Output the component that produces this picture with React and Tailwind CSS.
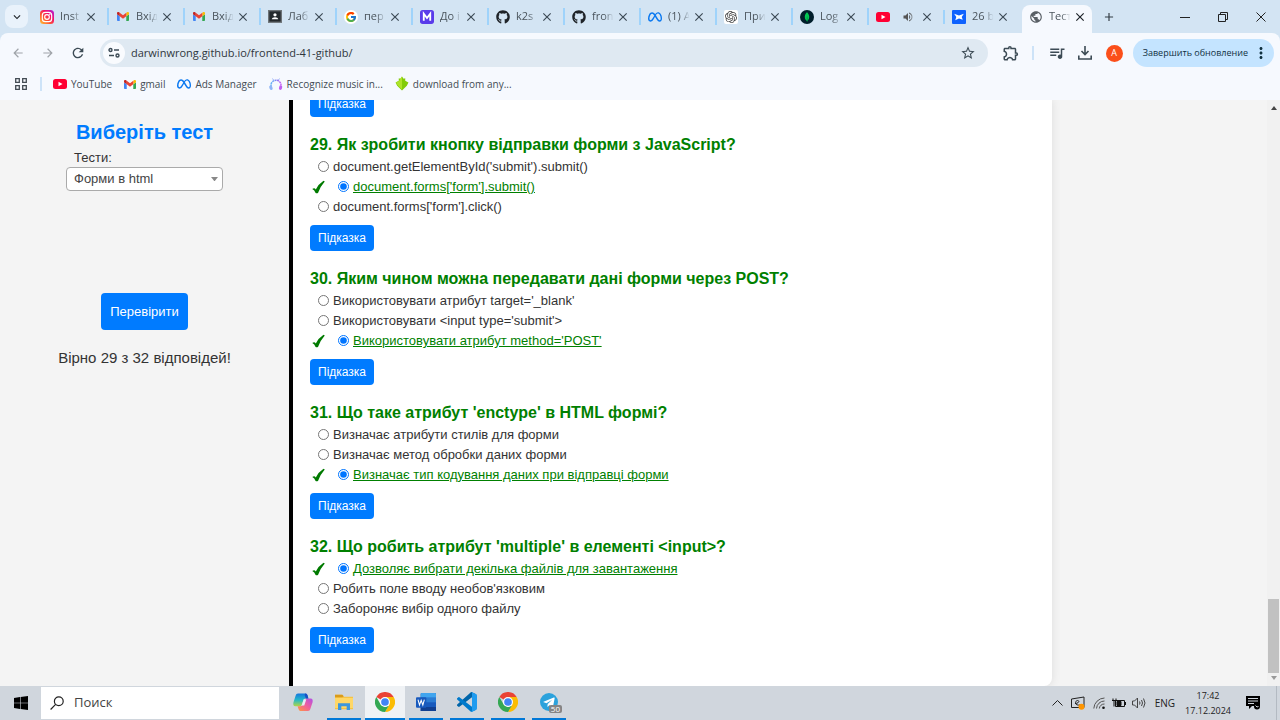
import React from "react";
import { FcGoogle } from "react-icons/fc";
import { FaGithub } from "react-icons/fa";
import { SiMeta, SiOpenai, SiMongodb } from "react-icons/si";
import {
  MdPublic,
  MdStarBorder,
  MdOutlineExtension,
  MdOutlineQueueMusic,
  MdVolumeUp,
  MdClose,
  MdAdd,
  MdMoreVert,
  MdArrowBack,
  MdArrowForward,
  MdRefresh,
  MdKeyboardArrowDown,
} from "react-icons/md";

const ui = "font-['Open_Sans','Noto_Sans',sans-serif]";

function Instagram() {
  return (
    <svg viewBox="0 0 24 24" className="size-3.5">
      <defs>
        <linearGradient id="ig" x1="0" y1="1" x2="1" y2="0">
          <stop offset="0" stopColor="#ffc837" />
          <stop offset=".35" stopColor="#ff5a2c" />
          <stop offset=".65" stopColor="#f2106d" />
          <stop offset="1" stopColor="#a621e0" />
        </linearGradient>
      </defs>
      <rect width="24" height="24" rx="6" fill="url(#ig)" />
      <rect x="4" y="4" width="16" height="16" rx="5" fill="none" stroke="#fff" strokeWidth="2" />
      <circle cx="12" cy="12" r="4" fill="none" stroke="#fff" strokeWidth="2" />
      <circle cx="16.8" cy="7.2" r="1.2" fill="#fff" />
    </svg>
  );
}

function Gmail() {
  return (
    <svg viewBox="52 42 88 66" className="w-3">
      <path fill="#4285f4" d="M58 108h14V74L52 59v43c0 3.32 2.69 6 6 6" />
      <path fill="#34a853" d="M120 108h14c3.32 0 6-2.69 6-6V59l-20 15" />
      <path fill="#fbbc04" d="M120 48v26l20-15v-8c0-7.42-8.47-11.65-14.4-7.2" />
      <path fill="#ea4335" d="M72 74V48l24 18 24-18v26L96 92" />
      <path fill="#c5221f" d="M52 51v8l20 15V48l-5.6-4.2c-5.94-4.45-14.4-.22-14.4 7.2" />
    </svg>
  );
}

function YouTube() {
  return (
    <svg viewBox="0 0 28 20" className="w-3.5">
      <rect width="28" height="20" rx="5" fill="#ff0033" />
      <path d="M11 5.5v9l8-4.5z" fill="#fff" />
    </svg>
  );
}

function Classroom() {
  return (
    <svg viewBox="0 0 26 24" className="w-3.5">
      <rect width="26" height="24" fill="#6d7377" />
      <rect x="2.5" y="2.5" width="21" height="19" fill="#24292c" />
      <circle cx="13" cy="9" r="3" fill="#fff" />
      <path d="M7 17c0-5 12-5 12 0z" fill="#fff" />
    </svg>
  );
}

function MLogo() {
  return (
    <svg viewBox="0 0 26 26" className="size-3.5">
      <rect width="26" height="26" rx="5" fill="#5a3bea" />
      <path d="M7 20V7l6 8 6-8v13" fill="none" stroke="#fff" strokeWidth="3.4" />
    </svg>
  );
}

function Bluebird() {
  return (
    <svg viewBox="0 0 26 26" className="size-3.5">
      <rect width="26" height="26" rx="2" fill="#0f62fe" />
      <path d="M4 7l9 3 9-3-4 6 2 5-7-2-7 3 2-6z" fill="#fff" />
    </svg>
  );
}

function Headphones() {
  return (
    <svg viewBox="0 0 28 26" className="w-3.5">
      <defs>
        <linearGradient id="hp" x1="0" x2="1">
          <stop offset="0" stopColor="#6bb7f5" />
          <stop offset=".5" stopColor="#7f86f4" />
          <stop offset="1" stopColor="#c85cf3" />
        </linearGradient>
      </defs>
      <path d="M4 17V14a10 9.500 0 0 1 20 0v3" fill="none" stroke="url(#hp)" strokeWidth="3" strokeDasharray="4 1" />
      <path d="M9 4 7 1M19 4l2-3" stroke="#7f9df4" strokeWidth="1.500" />
      <rect x="1" y="15" width="6" height="9" rx="3" transform="rotate(-15 4 20)" fill="#8fb4f7" />
      <rect x="20" y="15" width="6" height="9" rx="3" transform="rotate(15 24 20)" fill="#c060f2" />
    </svg>
  );
}

function GreenArrow() {
  return (
    <svg viewBox="0 0 26 28" className="w-3.5">
      <path d="M7 4l3 1 3-4 3 4 3-1v5l6 3-3 6-9 9-9-9-3-6 6-3z" fill="#83cc0a" />
      <path d="M10 5l3-4v24L5 17l-3-5 6-3z" fill="#aee32a" />
    </svg>
  );
}

function ChromeLogo() {
  return (
    <svg viewBox="0 0 48 48" className="size-5">
      <path fill="#ea4335" d="M24 24 3.2 12A24 24 0 0 1 44.8 12z" />
      <path fill="#fbbc04" d="M24 12h20.8A24 24 0 0 1 24 48l10.4-18z" />
      <path fill="#34a853" d="M3.2 12 13.6 30 24 36l9-3L24 48A24 24 0 0 1 3.2 12z" />
      <circle cx="24" cy="24" r="12" fill="#fff" />
      <circle cx="24" cy="24" r="9.2" fill="#4285f4" />
    </svg>
  );
}

function Copilot() {
  return (
    <svg viewBox="0 0 48 44" className="w-5">
      <defs>
        <linearGradient id="cpa" x1="0" y1="0" x2="0" y2="1">
          <stop offset="0" stopColor="#1576e0" />
          <stop offset=".5" stopColor="#25b8c9" />
          <stop offset="1" stopColor="#b5d643" />
        </linearGradient>
        <linearGradient id="cpb" x1="1" y1="0" x2="0" y2="1">
          <stop offset="0" stopColor="#b04fe8" />
          <stop offset=".5" stopColor="#f0609a" />
          <stop offset="1" stopColor="#ff9a3c" />
        </linearGradient>
      </defs>
      <path d="M12 1h18c3 0 4 2 5 5l2 7h-6c-4 0-6 2-7 6l-3 9c-1 3-3 4-6 4H6c-5 0-6-4-5-9l5-16c1-4 3-6 6-6z" fill="url(#cpa)" />
      <path d="M36 43H18c-3 0-4-2-5-5l-2-6h6c4 0 6-2 7-6l3-9c1-3 3-4 6-4h9c5 0 6 4 5 9l-5 15c-1 4-3 6-6 6z" fill="url(#cpb)" />
      <path d="M26 15h6l-5 15h-6z" fill="#e9edf4" />
      <path d="M29 1c4 0 5 2 6 5l2 7h-6l-3-8z" fill="#1b4fc4" />
    </svg>
  );
}

function Explorer() {
  return (
    <svg viewBox="0 0 54 48" className="w-[18px]">
      <path d="M0 2h22l5 6h27v38H0z" fill="#f6c342" />
      <path d="M0 2h22l4 5-4 3H0z" fill="#d99b1c" />
      <path d="M0 12h54v30H0z" fill="#ffd766" />
      <path d="M9 48V28h36v20H35V37H19v11z" fill="#3d97dd" />
    </svg>
  );
}

function Word() {
  return (
    <svg viewBox="0 0 60 56" className="w-5">
      <rect x="14" width="46" height="56" rx="3" fill="#185abd" />
      <path d="M14 3a3 3 0 0 1 3-3h40a3 3 0 0 1 3 3v11H14z" fill="#41a5ee" />
      <path d="M14 14h46v14H14z" fill="#2b7cd3" />
      <path d="M14 42h46v11a3 3 0 0 1-3 3H17a3 3 0 0 1-3-3z" fill="#103f91" />
      <rect y="13" width="31" height="31" rx="3" fill="#185abd" />
      <path d="m6 20 4.5 16L15.500 22l5 14L25 20" fill="none" stroke="#fff" strokeWidth="3.200" />
    </svg>
  );
}

function VSCode() {
  return (
    <svg viewBox="0 0 100 100" className="size-5">
      <path fill="#0065a9" d="M96 11 75 1c-2-1-5-1-7 1L1 63c-2 2-2 5 0 6l6 5c2 1 4 1 5 0L93 13c3-2 7 0 7 3 0-2-2-4-4-5z" />
      <path fill="#007acc" d="M96 89 75 99c-2 1-5 1-7-1L1 37c-2-2-2-5 0-6l6-5c2-1 4-1 5 0l81 61c3 2 7 0 7-3 0 2-2 4-4 5z" />
      <path fill="#1f9cf0" d="M75 99c-2 1-5 1-7-1 3 2 7 0 7-3V5c0-4-4-6-7-3 2-2 5-2 7-1l21 10c2 1 4 3 4 6v66c0 3-2 5-4 6z" />
    </svg>
  );
}

function Telegram() {
  return (
    <span className="relative flex">
      <svg viewBox="0 0 56 56" className="size-[18px]">
        <circle cx="28" cy="28" r="28" fill="#2ba2dc" />
        <path d="M11 27 43 14c2-1 3 0 2.500 3l-5 25c0 2-2 2.500-3.500 1.500L29 38l-4 4c-1 1-2 1-2-1l1-7 14-13-18 11-8-3c-2-.6-2-1.500-1-2z" fill="#fff" />
      </svg>
      <span className="absolute -right-1 -bottom-0.5 rounded-xs bg-[#858585] px-0.5 text-[8px] leading-2 text-white">50</span>
    </span>
  );
}

const tabs = [
  { icon: <Instagram />, title: "Inst" },
  { icon: <Gmail />, title: "Вхід" },
  { icon: <Gmail />, title: "Вхід" },
  { icon: <Classroom />, title: "Лаб" },
  { icon: <span className="rounded-full bg-white p-px"><FcGoogle className="size-3" /></span>, title: "пер" },
  { icon: <MLogo />, title: "До і" },
  { icon: <FaGithub className="size-3.5 text-[#1f2328]" />, title: "k2s" },
  { icon: <FaGithub className="size-3.5 text-[#1f2328]" />, title: "fron" },
  { icon: <SiMeta className="size-3.5 text-[#0a78f0]" />, title: "(1) A" },
  { icon: <span className="rounded-xs bg-white p-px"><SiOpenai className="size-3 text-[#444]" /></span>, title: "При" },
  { icon: <span className="rounded-full bg-[#001e2b] p-0.5"><SiMongodb className="size-2.5 text-[#00c853]" /></span>, title: "Log" },
  { icon: <YouTube />, sound: true, title: "" },
  { icon: <Bluebird />, title: "26 b" },
];

function TabBody({ tab, active }) {
  return (
    <>
      <span className="flex w-3.5 shrink-0 justify-center">{tab.icon}</span>
      <span className="ml-1.5 flex w-6 shrink-0 items-center text-[11px] whitespace-nowrap text-[#4a545c] mask-r-from-50% mask-r-to-90%">
        {tab.sound ? <MdVolumeUp className="ml-1.5 size-3 text-[#555]" /> : tab.title}
      </span>
      <button aria-label="Закрити вкладку" className={active ? "text-[#1d2329]" : "text-[#3c4a55]"}>
        <MdClose className="size-3.5 stroke-current" />
      </button>
    </>
  );
}

function TabStrip() {
  return (
    <div className="flex h-[33px] shrink-0 items-center bg-[#d3e4f3]">
      <button aria-label="Пошук вкладок" className="ml-[5px] flex size-[23px] items-center justify-center rounded-lg bg-[#e9f2fb] text-[#20262b]">
        <MdKeyboardArrowDown className="size-3.5 stroke-current" />
      </button>
      <div className="ml-[5px] flex min-w-0 items-center">
        {tabs.map((tab, i) => (
          <div key={i} className={i === 12 ? "flex w-[76px] items-center pl-[7px]" : "flex w-[76px] items-center border-r-2 border-[#9fd3fb] pl-[7px]"}>
            <TabBody tab={tab} />
          </div>
        ))}
      </div>
      <div className="ml-px mt-[5px] flex w-[70px] items-center self-stretch rounded-t-lg bg-[#f6f9fe] pb-[5px] pl-[7px]">
        <TabBody active tab={{ icon: <MdPublic className="size-3.5 text-[#5a6066]" />, title: "Тест" }} />
      </div>
      <button aria-label="Нова вкладка" className="ml-2.5 text-[#333c44]">
        <MdAdd className="size-3.5" />
      </button>
      <div className="ml-auto flex text-[#222]">
        <button aria-label="Згорнути" className="flex w-[38px] justify-center">
          <svg viewBox="0 0 10 10" className="size-2.5" fill="none" stroke="currentColor"><path d="M0 5.500h10" /></svg>
        </button>
        <button aria-label="Відновити" className="flex w-[38px] justify-center">
          <svg viewBox="0 0 10 10" className="size-2.5" fill="none" stroke="currentColor"><path d="M.5 2.500h7v7h-7zM2.500 2.500v-2h7v7h-2" /></svg>
        </button>
        <button aria-label="Закрити" className="flex w-[38px] justify-center">
          <svg viewBox="0 0 10 10" className="size-2.5" fill="none" stroke="currentColor"><path d="M.5.5l9 9M9.500.5l-9 9" /></svg>
        </button>
      </div>
    </div>
  );
}

function Toolbar() {
  return (
    <div className="flex h-10 shrink-0 items-center rounded-t-lg bg-[#f6f9fe] pr-1.5 text-[#3c4b55]">
      <button aria-label="Назад" className="ml-[11px] text-[#9fa4a9]"><MdArrowBack className="size-3.5" /></button>
      <button aria-label="Вперед" className="ml-4 text-[#9fa4a9]"><MdArrowForward className="size-3.5" /></button>
      <button aria-label="Оновити" className="ml-[15px]"><MdRefresh className="size-4" /></button>
      <div className="ml-3.5 flex h-7 min-w-0 flex-1 items-center rounded-full bg-[#dfe9f2] pr-3 pl-[3px]">
        <button aria-label="Відомості про сайт" className="flex size-[22px] shrink-0 items-center justify-center rounded-full bg-[#f9fbfe]">
          <svg viewBox="0 0 12 12" className="size-3" fill="none" stroke="currentColor" strokeWidth="1.400">
            <circle cx="2.500" cy="3" r="1.500" /><path d="M6 3h5M1 8.500h5" /><circle cx="9.500" cy="8.500" r="1.500" />
          </svg>
        </button>
        <input aria-label="Адресний рядок" defaultValue="darwinwrong.github.io/frontend-41-github/" className="ml-1.5 min-w-0 flex-1 bg-transparent text-[11px] text-[#30373d] outline-none" />
        <button aria-label="Додати закладку"><MdStarBorder className="size-4" /></button>
      </div>
      <button aria-label="Розширення" className="ml-3.5"><MdOutlineExtension className="size-[18px]" /></button>
      <span className="ml-3 h-3.5 w-0.5 bg-[#cde3f8]" />
      <button aria-label="Медіа" className="ml-3.5"><MdOutlineQueueMusic className="size-[18px]" /></button>
      <button aria-label="Завантаження" className="ml-3">
        <svg viewBox="0 0 14 14" className="size-3.5" fill="none" stroke="currentColor" strokeWidth="1.600">
          <path d="M7 0v8M3.500 5 7 8.500 10.500 5M.8 9.500V13h12.400V9.500" />
        </svg>
      </button>
      <button className="ml-3.5 size-[17px] rounded-full bg-[#fb4f1a] text-[9px] text-white">A</button>
      <button className="ml-2.5 flex h-7 items-center rounded-full bg-[#c4e4ff] pr-1 pl-2.5 text-[9px] font-medium text-[#10303f]">
        Завершить обновление
        <MdMoreVert className="ml-1 size-[18px]" />
      </button>
    </div>
  );
}

function Bookmark({ icon, children }) {
  return (
    <a href="#" className="flex items-center gap-1">
      {icon}
      {children}
    </a>
  );
}

function Bookmarks() {
  return (
    <nav className="flex h-[27px] shrink-0 items-center bg-[#f6f9fe] pb-[5px] text-[10px] text-[#434c54]">
      <button aria-label="Усі закладки" className="ml-[15px]">
        <svg viewBox="0 0 12 12" className="size-3" fill="none" stroke="currentColor" strokeWidth="1.300">
          <path d="M.7.7h3.600v3.600H.7zM7.700.7h3.600v3.600H7.700zM.7 7.700h3.600v3.600H.7zM7.700 7.700h3.600v3.600H7.700z" />
        </svg>
      </button>
      <span className="ml-[13px] h-3.5 w-0.5 bg-[#cde3f8]" />
      <div className="ml-[11px] flex gap-3">
        <Bookmark icon={<YouTube />}>YouTube</Bookmark>
        <Bookmark icon={<Gmail />}>gmail</Bookmark>
        <Bookmark icon={<SiMeta className="size-3.5 text-[#0a78f0]" />}>Ads Manager</Bookmark>
        <Bookmark icon={<Headphones />}>Recognize music in...</Bookmark>
        <Bookmark icon={<GreenArrow />}>download from any...</Bookmark>
      </div>
    </nav>
  );
}

const questions = [
  {
    n: 29,
    title: "Як зробити кнопку відправки форми з JavaScript?",
    options: ["document.getElementById('submit').submit()", "document.forms['form'].submit()", "document.forms['form'].click()"],
    right: 1,
  },
  {
    n: 30,
    title: "Яким чином можна передавати дані форми через POST?",
    options: ["Використовувати атрибут target='_blank'", "Використовувати <input type='submit'>", "Використовувати атрибут method='POST'"],
    right: 2,
  },
  {
    n: 31,
    title: "Що таке атрибут 'enctype' в HTML формі?",
    options: ["Визначає атрибути стилів для форми", "Визначає метод обробки даних форми", "Визначає тип кодування даних при відправці форми"],
    right: 2,
  },
  {
    n: 32,
    title: "Що робить атрибут 'multiple' в елементі <input>?",
    options: ["Дозволяє вибрати декілька файлів для завантаження", "Робить поле вводу необов'язковим", "Забороняє вибір одного файлу"],
    right: 0,
  },
];

function Hint() {
  return (
    <button className="h-[26px] shrink-0 self-start rounded bg-[#007bff] px-2 text-xs text-white">Підказка</button>
  );
}

function Question({ q }) {
  return (
    <section className="flex shrink-0 flex-col">
      <h3 className="text-base leading-6 font-bold text-[#008000]">{q.n}. {q.title}</h3>
      {q.options.map((text, i) => {
        const right = i === q.right;
        return (
          <div key={text} className={right ? "flex h-5 items-center pl-0.5" : "flex h-5 items-center pl-2"}>
            {right && (
              <svg viewBox="0 0 14 14" className="mr-3 size-3.5">
                <path d="M.3 9Q2.500 7.200 3.800 9.600Q6.500 4 11.500.8L12.800 1.400Q8.500 6 6 13Q4.500 13.500 3.600 13Q2.500 10.200.3 9z" fill="#007a00" />
              </svg>
            )}
            <input type="radio" id={"q" + q.n + "-" + i} name={"q" + q.n} defaultChecked={right} className="mb-0.5 size-[11px] accent-[#0075ff]" />
            <label htmlFor={"q" + q.n + "-" + i} className={right ? "ml-1 text-[13px] leading-5 text-[#008000] underline" : "ml-1 text-[13px] leading-5 text-[#333]"}>
              {text}
            </label>
          </div>
        );
      })}
      <div className="mt-2 flex">
        <Hint />
      </div>
    </section>
  );
}

function Page() {
  return (
    <div className="flex min-h-0 flex-1 bg-[#f4f4f4] font-['Liberation_Sans',Arial,sans-serif] text-[#333]">
      <aside className="flex w-[289px] shrink-0 flex-col items-center pt-4">
        <h2 className="text-xl leading-8 font-bold text-[#007bff]">Виберіть тест</h2>
        <div className="flex w-[157px] flex-col">
          <label htmlFor="tests" className="pl-2 text-[13px] leading-[19px]">Тести:</label>
          <div className="relative flex">
            <select id="tests" className="h-6 w-full appearance-none rounded border border-[#aaa] bg-white px-[7px] text-[13px] text-[#444]">
              <option>Форми в html</option>
            </select>
            <svg viewBox="0 0 8 5" className="pointer-events-none absolute top-2.5 right-[5px] w-[7px]"><path d="M0 0h8L4 5z" fill="#888" /></svg>
          </div>
        </div>
        <button className="mt-[102px] h-[37px] rounded bg-[#007bff] px-[9px] text-[13px] text-white">Перевірити</button>
        <p className="mt-4 text-[15px] leading-6">Вірно 29 з 32 відповідей!</p>
      </aside>
      <div className="flex min-w-0 flex-1 overflow-hidden">
        <main className="flex w-[78%] flex-col justify-end gap-4 overflow-hidden rounded-br-lg border-l-4 border-black bg-white pb-[33px] pl-[17px] shadow-[0_0_10px_rgba(0,0,0,0.1)]">
          <Hint />
          {questions.map((q) => <Question key={q.n} q={q} />)}
        </main>
      </div>
      <div className="flex w-[13px] shrink-0 flex-col items-center bg-[#f1f1f1] py-1.5">
        <svg viewBox="0 0 6 4" className="w-1.5"><path d="M0 4h6L3 0z" fill="#444" /></svg>
        <div className="mt-auto mb-[3px] h-[74px] w-[11px] bg-[#c1c1c1]" />
        <svg viewBox="0 0 6 4" className="w-1.5"><path d="M0 0h6L3 4z" fill="#999" /></svg>
      </div>
    </div>
  );
}

const apps = [
  { name: "Copilot", icon: <Copilot /> },
  { name: "Провідник", icon: <Explorer />, open: true },
  { name: "Chrome", icon: <ChromeLogo />, open: true, active: true },
  { name: "Word", icon: <Word />, open: true },
  { name: "VS Code", icon: <VSCode />, open: true },
  { name: "Chrome 2", icon: <ChromeLogo />, open: true },
  { name: "Telegram", icon: <Telegram />, open: true },
];

function Taskbar() {
  return (
    <footer className="flex h-[34px] shrink-0 items-stretch bg-[#d0d6dd] text-[#222]">
      <button aria-label="Пуск" className="flex w-[41px] items-center justify-center">
        <svg viewBox="0 0 14 14" className="size-3.5">
          <path d="M0 2 6 1v5.700H0zM6.600.9 14 0v6.700H6.600zM0 7.300h6V13l-6-1zM6.600 7.300H14V14l-7.400-1z" fill="#000" />
        </svg>
      </button>
      <div className="my-px flex w-[238px] items-center bg-white pl-[9px]">
        <svg viewBox="0 0 14 14" className="size-3.5" fill="none" stroke="#222" strokeWidth="1.200">
          <circle cx="8.800" cy="5.200" r="4.400" /><path d="M5.600 8.400.6 13.500" />
        </svg>
        <input aria-label="Поиск" placeholder="Поиск" className="ml-2.5 w-40 text-[13px] outline-none placeholder:text-[#444]" />
      </div>
      <div className="ml-1 flex gap-px">
        {apps.map((a) => (
          <button
            key={a.name}
            aria-label={a.name}
            className={a.active ? "flex w-10 flex-col items-center bg-[#eff2f5]" : "flex w-10 flex-col items-center px-[3px]"}
          >
            <span className="flex flex-1 items-center">{a.icon}</span>
            <span className={a.open ? "h-0.5 w-full bg-[#0078d7]" : "h-0.5 w-full"} />
          </button>
        ))}
      </div>
      <div className="ml-auto flex items-center">
        <svg viewBox="0 0 11 6" className="w-[11px]" fill="none" stroke="currentColor"><path d="m.5 5.500 5-5 5 5" /></svg>
        <svg viewBox="0 0 14 14" className="ml-2 size-3.5" fill="none" stroke="currentColor">
          <path d="M.5 3 13 1v10.500H.5zM4 7.500c4 0 5-3 2.500-3s-3.500 5.500 2.500 4.500" />
          <circle cx="10.500" cy="10.800" r="3" fill="#ff9500" stroke="none" />
        </svg>
        <svg viewBox="0 0 12 12" className="ml-2 size-3" fill="none" stroke="#555">
          <path d="M.8 11.500A11 11 0 0 1 11.500 1M3.500 11.500a8 8 0 0 1 8-7.500M6.300 11.500A5 5 0 0 1 11.500 7" /><circle cx="10.500" cy="10.700" r="1.300" fill="#111" stroke="none" />
        </svg>
        <svg viewBox="0 0 14 10" className="ml-[7px] w-3.5" fill="none" stroke="#111">
          <path d="M3.500 2.500h9v6h-9zM13.500 4v3M1 .5v2M4 .5v2M0 2.500h5M2 3v5.500" /><path d="M5 3.500h4v4H5z" fill="#111" />
        </svg>
        <svg viewBox="0 0 14 12" className="ml-1.5 w-3.5" fill="none" stroke="#444">
          <path d="M.5 4h2l3-3v10l-3-3h-2zM7.500 4.500q1 1.500 0 3M9.500 3q2 3 0 6M11.500 1.500q3 4.500 0 9" />
        </svg>
        <span className="ml-[9px] text-[10px]">ENG</span>
        <div className="ml-2.5 text-center text-[9px] leading-[15px]">
          <div>17:42</div>
          <div>17.12.2024</div>
        </div>
        <svg viewBox="0 0 14 14" className="ml-[15px] size-3.5">
          <path d="M0 0h14v10H6l-3 3v-3H0z" fill="#000" /><path d="M2 2.500h10M2 5h10M2 7.500h6" stroke="#d0d6dd" />
          <circle cx="11" cy="10.500" r="3" fill="#000" /><path d="M9.500 9.500q1.500 2.500 3 1" stroke="#d0d6dd" fill="none" />
        </svg>
        <span className="ml-4 h-full w-px bg-[#b3bac2]" />
        <span className="w-[3px]" />
      </div>
    </footer>
  );
}

export default function App() {
  return (
    <div className={"flex h-screen flex-col overflow-hidden bg-[#d3e4f3] " + ui}>
      <TabStrip />
      <Toolbar />
      <Bookmarks />
      <Page />
      <Taskbar />
    </div>
  );
}
